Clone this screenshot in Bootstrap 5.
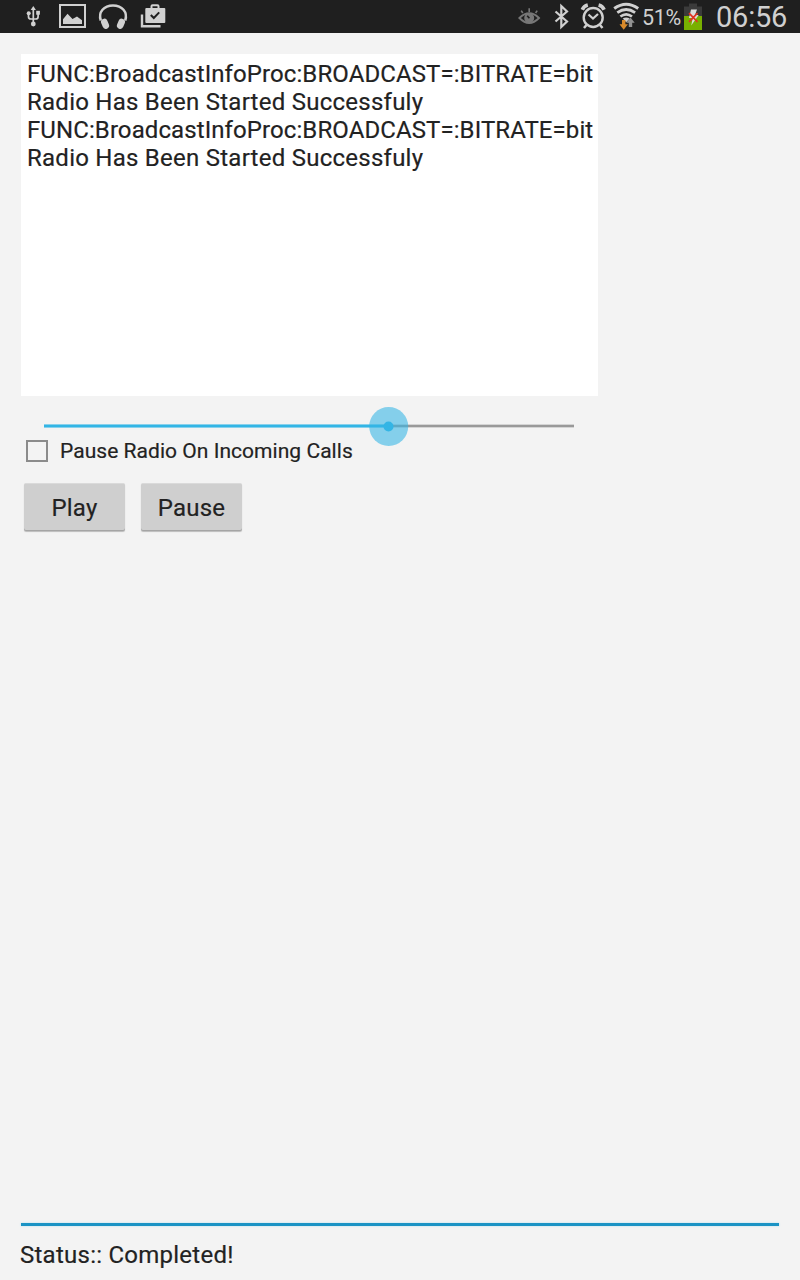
<!DOCTYPE html>
<html lang="en">
<head>
<meta charset="utf-8">
<meta name="viewport" content="width=device-width, initial-scale=1">
<title>Radio</title>
<link href="https://cdn.jsdelivr.net/npm/bootstrap@5.3.0/dist/css/bootstrap.min.css" rel="stylesheet">
<style>
body { font-family: Roboto, sans-serif; background: #f3f3f3; color: #222; }
.status-bar { height: 33px; background: #1f1f1f; color: #d0d0d0; }
.status-bar svg { display: block; flex: none; height: 33px; }
.pct { font-size: 21.5px; line-height: 35px; width: 39px; margin-left: 2px; white-space: nowrap; letter-spacing: -.3px; }
.clock { font-size: 29px; line-height: 34px; width: 72px; margin-left: 13px; margin-right: 12px; white-space: nowrap; letter-spacing: -.2px; }
main, .message { -webkit-text-stroke: .18px #222; }
.log { width: 577px; height: 342px; padding: 6px 5px 0 6px; margin: 21px 0 0 21px; font-size: 24px; line-height: 28px; }
.func-line { letter-spacing: .09px; }
.radio-line { letter-spacing: .25px; }
.seek { width: 530px; height: 40px; margin: 10px 0 0 44px; }
.pause-calls { height: 28px; margin: -9px 0 0 26px; font-size: 21px; line-height: 28px; gap: 12px; }
.call-text { letter-spacing: .04px; }
.pause-calls .form-check-input { width: 22px; height: 22px; border: 2px solid #8b8b8b; border-radius: 0; background: transparent; }
.controls { margin: 18px 0 0 24px; gap: 16px; }
.controls .btn { width: 101px; height: 48px; padding: 1px 0 0; font-size: 24px; line-height: 47px; letter-spacing: .2px; color: #222; background: #cfcfcf; border: 0; border-top: 1px solid #dadada; border-radius: 2px; box-shadow: inset 0 -1px #a5a5a5, 0 1px 1px #bcbcbc; }
.rule { height: 3px; margin: 0 21px; background: #1b93c4; box-shadow: 0 0 2px #a6dcef; }
.message { margin: 15px 0 11px 20px; font-size: 24px; line-height: 28px; height: 28px; letter-spacing: .25px; }
</style>
</head>
<body class="d-flex flex-column vh-100 overflow-hidden">
<header class="status-bar d-flex align-items-start">
  <svg width="200" height="33" viewBox="0 0 200 33" fill="none" stroke="#d0d0d0">
    <!-- usb -->
    <path d="M33.3 9v15M28.500 13.500v3.200q0 2.300 2.300 2.300h5q2.300 0 2.300-2.300V12.500" stroke-width="1.700"/>
    <path d="M33.3 6l2.600 4h-5.200z" fill="#d0d0d0" stroke="none"/>
    <circle cx="33.3" cy="24" r="2.400" fill="#d0d0d0" stroke="none"/>
    <circle cx="28.700" cy="13.300" r="2" fill="#d0d0d0" stroke="none"/>
    <path d="M36.200 10.800h3.700v3.900h-3.700z" fill="#d0d0d0" stroke="none"/>
    <!-- picture -->
    <path d="M60 5h25v22H60z" stroke-width="2"/>
    <path d="M63 24v-4.800l4.500-5.500 5 5.300 4.500-2.500 5 3.700V24z" fill="#d0d0d0" stroke="none"/>
    <!-- headphones -->
    <path d="M100.800 20.500C98 12 104 5.500 113 5.500s15 6.500 12.200 15" stroke-width="2.500"/>
    <path d="M104.300 22l1.500 3.600M121.700 22l-1.500 3.600" stroke-width="6.600" stroke-linecap="round"/>
    <!-- shop bag -->
    <path d="M142 14.500v11.700h18.500" stroke-width="2.400"/>
    <path d="M151.500 9V6.200q0-1 1-1h5q1 0 1 1V9" stroke-width="2"/>
    <rect x="145.300" y="8" width="20" height="15" rx="1" fill="#d0d0d0" stroke="none"/>
    <path d="M150.800 15l3 3 5.400-5.600" stroke="#1f1f1f" stroke-width="2"/>
  </svg>
  <svg class="ms-auto" width="125" height="33" viewBox="515 0 125 33" fill="none" stroke="#d0d0d0">
    <!-- eye -->
    <g stroke="#777"><path d="M519.400 18q9.800-9.500 19.600 0-9.800 10-19.600 0z" stroke-width="1.900"/>
    <path d="M529.200 12V8.300M522.800 13l-1.600-2.400M535.600 13l1.600-2.400" stroke-width="1.600"/>
    <circle cx="529.200" cy="18" r="5" fill="#777" stroke="none"/><path d="M527.200 15.800l2.200 2.400" stroke="#1f1f1f" stroke-width="1.700"/></g>
    <!-- bluetooth -->
    <path d="M555.500 11.500l11.500 10-5.700 5.500V6l5.700 5.500-11.500 10" stroke-width="2.200"/>
    <!-- alarm -->
    <circle cx="593.200" cy="17.500" r="9.500" stroke-width="2.400"/>
    <path d="M588.500 14.500l4.500 4 5-4.500" stroke-width="2.200"/>
    <path d="M582.300 9.700q1.500-3.700 5.500-4.700M604.100 9.700q-1.500-3.700-5.500-4.700" stroke-width="3.600"/>
    <path d="M586.500 25l-2.500 3M600 25l2.500 3" stroke-width="2.500"/>
    <!-- wifi -->
    <path d="M614.200 8.500q12-8.400 24 0" stroke-width="3"/><path d="M617.300 12.700q8.900-6.400 17.800 0" stroke-width="2.700"/><path d="M620.400 16.600q5.800-4.600 11.600 0" stroke-width="2.600"/>
    <path d="M622.700 18.600q3.500-2.200 7 0l-3.500 3.600z" fill="#d0d0d0" stroke="none"/>
    <path d="M622 20h3.400v4.300h2.500l-4.200 5.500-4.200-5.500h2.500z" fill="#d88a2b" stroke="none"/>
    <path d="M628.800 27v-4.300h-2.500l4.200-5.200 4.200 5.200h-2.500V27z" fill="#929292" stroke="none"/>
  </svg>
  <div class="pct">51%</div>
  <svg width="22" height="33" viewBox="681 0 22 33">
    <path d="M689 3.500h8v3h5V16h-18V6.500h5z" fill="#3b3b3b"/><path d="M684 16h18v14h-18z" fill="#78b000"/>
    <path d="M691 9.500h6l-2 5.500h3.700l-7.500 10.500 1.600-7.500H689z" fill="#ddd"/>
    <path d="M689 13.200l8.500 8.600M697.500 13.200l-8.500 8.600" stroke="#e03422" stroke-width="1.700"/>
  </svg>
  <div class="clock">06:56</div>
</header>
<main class="flex-grow-1">
  <div class="log bg-white overflow-hidden text-nowrap">
    <div class="overflow-hidden">
      <div class="func-line">FUNC:BroadcastInfoProc:BROADCAST=:BITRATE=bit</div>
      <div class="radio-line">Radio Has Been Started Successfuly</div>
      <div class="func-line">FUNC:BroadcastInfoProc:BROADCAST=:BITRATE=bit</div>
      <div class="radio-line">Radio Has Been Started Successfuly</div>
    </div>
  </div>
  <svg class="seek d-block" viewBox="0 0 530 40">
    <path d="M0 20h530" stroke="#d4d4d4" stroke-width="4"/><path d="M0 20h530" stroke="#999" stroke-width="2"/>
    <path d="M0 20h344" stroke="#a5dbee" stroke-width="4"/><path d="M0 20h344" stroke="#33b5e5" stroke-width="2.400"/>
    <circle cx="344.700" cy="20.500" r="19.500" fill="#33b5e5" fill-opacity=".58"/>
    <circle cx="344.500" cy="20.500" r="5" fill="#33b5e5"/>
  </svg>
  <label class="pause-calls d-flex align-items-center">
    <input class="form-check-input m-0" type="checkbox"><span class="call-text">Pause Radio On Incoming Calls</span>
  </label>
  <div class="controls d-flex">
    <button class="btn" type="button">Play</button>
    <button class="btn" type="button">Pause</button>
  </div>
</main>
<footer>
  <div class="rule"></div>
  <div class="message">Status:: Completed!</div>
</footer>
<script src="https://cdn.jsdelivr.net/npm/bootstrap@5.3.0/dist/js/bootstrap.bundle.min.js"></script>
</body>
</html>
